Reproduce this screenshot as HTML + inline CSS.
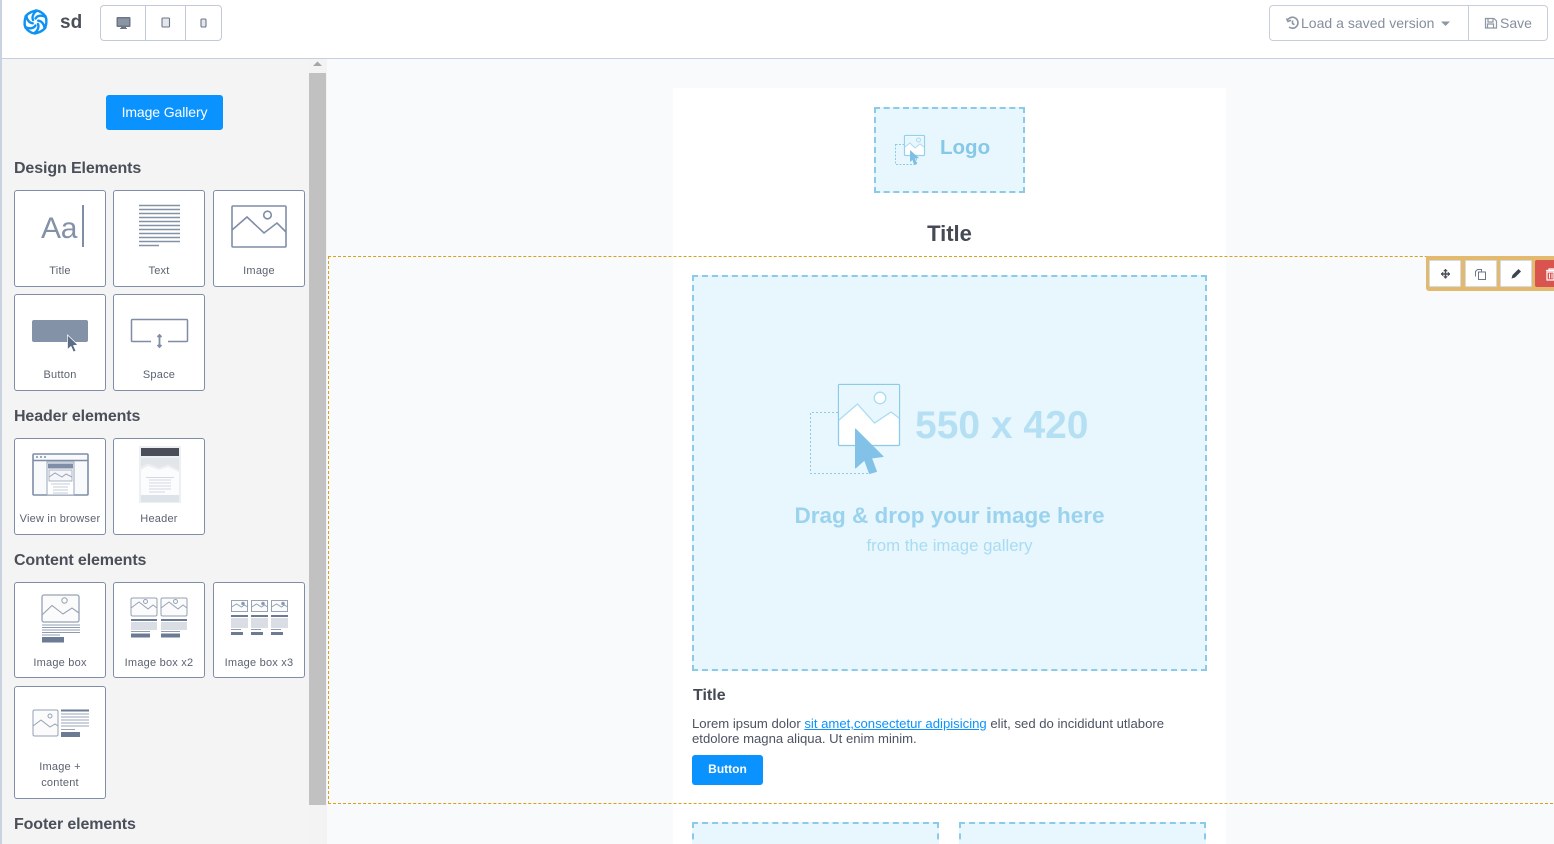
<!DOCTYPE html>
<html><head><meta charset="utf-8"><style>
html,body{margin:0;padding:0;width:1554px;height:844px;overflow:hidden;background:#f8fafc;font-family:"Liberation Sans",sans-serif}
#root{position:absolute;left:0;top:0;width:1554px;height:844px;overflow:hidden}
.a{position:absolute}
.tile{position:absolute;box-sizing:border-box;background:#fff;border:1px solid #7f8ea6;border-radius:3px;width:92px}
.lbl{position:absolute;left:0;width:90px;text-align:center;font-size:11px;letter-spacing:.22px;color:#5b6270;line-height:16px;margin-top:1px}
.h{position:absolute;left:14px;font-size:16px;font-weight:bold;color:#4a4f5a;line-height:20px;letter-spacing:-.12px;margin-top:2px}
svg{position:absolute;left:0;top:0;overflow:visible}
</style></head><body><div id="root">
<!-- canvas -->
<div class="a" style="left:673px;top:88px;width:553px;height:756px;background:#fff"></div>
<!-- header -->
<div class="a" style="left:0;top:0;width:1554px;height:58px;background:#fff"></div>
<div class="a" style="left:0;top:58px;width:1554px;height:1px;background:#c5d0de"></div>
<div class="a" style="left:0;top:0;width:2px;height:844px;background:#c9d3e0"></div>
<svg width="1554" height="60" fill="none">
<g transform="translate(35.5,22)" stroke="#0e93f5" stroke-width="2.400" stroke-linecap="round">
<path d="M0 -11.500C4 -11.500 9 -8 10 -5C7 -7 2 -7 0 -3.500"/>
<path d="M10 -5.700C11.500 -2 11 4 9 6C9 3 6.500 -1 2.700 -1.300"/>
<path d="M10 5.500C7.500 9 2 11.500 -1 11C1.500 9.500 4 5.500 2.500 2"/>
<path d="M0 11.500C-4 11.500 -9 8 -10 5C-7 7 -2 7 0 3.500"/>
<path d="M-10 5.700C-11.500 2 -11 -4 -9 -6C-9 -3 -6.500 1 -2.700 1.300"/>
<path d="M-10 -5.500C-7.500 -9 -2 -11.500 1 -11C-1.500 -9.500 -4 -5.500 -2.500 -2"/>
</g>
</svg>
<div class="a" style="left:60px;top:10px;font-size:19px;font-weight:bold;color:#4a4f5a;line-height:25px">sd</div>
<div class="a" style="left:100px;top:5px;width:122px;height:36px;box-sizing:border-box;border:1px solid #c0cad8;border-radius:4px"></div>
<div class="a" style="left:145px;top:5px;width:1px;height:36px;background:#c0cad8"></div>
<div class="a" style="left:185px;top:5px;width:1px;height:36px;background:#c0cad8"></div>
<svg width="300" height="50">
<rect x="116.500" y="17" width="14" height="10" rx="1" fill="#6d7686"/><rect x="118" y="18.500" width="11" height="7" fill="#8b94a2"/><path d="M121 27h5v1.500h-5zM120 28h7v1h-7z" fill="#6d7686"/>
<rect x="162" y="18" width="7.500" height="9" rx="1" fill="#e3e7ec" stroke="#6d7686" stroke-width="1.100"/>
<rect x="201" y="19" width="5" height="8" rx="1" fill="#e3e7ec" stroke="#6d7686" stroke-width="1.100"/>
</svg>
<div class="a" style="left:1269px;top:5px;width:279px;height:36px;box-sizing:border-box;border:1px solid #c5cfdb;border-radius:4px"></div>
<div class="a" style="left:1468px;top:5px;width:1px;height:36px;background:#c5cfdb"></div>
<svg width="1554" height="50" fill="none" stroke="#8c96a5">
<path d="M1288 19.500A5.500 5.500 0 1 1 1289 27M1286.500 18.500l1.500 3 3-1.200M1292.500 20.500v3l2 1.200" stroke-width="1.600"/>
<path d="M1441 21.500h9l-4.500 4.500z" fill="#8c96a5" stroke="none"/>
<path d="M1485.500 18.500h8.500l2.500 2.500v7h-11zM1488 18.500v3.500h5v-3.500M1487.500 28v-4h6v4" stroke-width="1.200"/>
</svg>
<div class="a" style="left:1301px;top:14px;font-size:14px;letter-spacing:.02px;color:#858f9e;line-height:18px;white-space:nowrap">Load a saved version</div>
<div class="a" style="left:1500px;top:14px;font-size:14px;color:#858f9e;line-height:18px">Save</div>

<!-- sidebar -->
<div class="a" style="left:2px;top:59px;width:307px;height:785px;background:#f4f4f4"></div>
<div class="a" style="left:309px;top:59px;width:18px;height:785px;background:#f3f3f3"></div>
<div class="a" style="left:309px;top:73px;width:17px;height:732px;background:#c1c1c1"></div>
<svg width="330" height="70"><path d="M313 66l4.500-4.500 4.500 4.500z" fill="#a3a6ab"/></svg>
<div class="a" style="left:106px;top:95px;width:117px;height:35px;background:#0a93fe;border-radius:3px;color:#fff;font-size:14px;line-height:34px;text-align:center;letter-spacing:-.1px">Image Gallery</div>

<div class="h" style="top:157px">Design Elements</div>
<div class="tile" style="left:14px;top:190px;height:97px"><div class="lbl" style="top:71px">Title</div>
<div class="a" style="left:26px;top:21px;font-size:30px;line-height:34px;color:#8492a8;letter-spacing:-.3px">Aa</div><div class="a" style="left:67px;top:14px;width:2px;height:42px;background:#7f8ea6"></div></div>
<div class="tile" style="left:113px;top:190px;height:97px"><div class="lbl" style="top:71px">Text</div>
<svg width="90" height="70"><path d="M25 14.500h41M25 18.500h41M25 22.500h41M25 26.500h41M25 30.500h41M25 34.500h41M25 38.500h41M25 42.500h41M25 46.500h41M25 50.500h41M25 54.500h20" stroke="#8492a8" stroke-width="1.500" fill="none"/></svg></div>
<div class="tile" style="left:213px;top:190px;height:97px"><div class="lbl" style="top:71px">Image</div>
<svg width="90" height="70" fill="none" stroke="#7f8ea6" stroke-width="1.600"><rect x="18" y="15" width="54" height="41" rx="1"/><circle cx="53.500" cy="24" r="3.800"/><path d="M18 39L33 26L50 42L63 32L72 41"/></svg></div>

<div class="tile" style="left:14px;top:294px;height:97px"><div class="lbl" style="top:71px">Button</div>
<svg width="90" height="70"><rect x="17" y="25" width="56" height="22" rx="2" fill="#8492a8"/><path d="M52.500 40V54.500L56 51.500L58.500 57L61 56L58.500 50.500L63 50Z" fill="#5c6c87" stroke="#fff" stroke-width=".7"/></svg></div>
<div class="tile" style="left:113px;top:294px;height:97px"><div class="lbl" style="top:71px">Space</div>
<svg width="90" height="70" fill="none" stroke="#7f8ea6" stroke-width="1.500"><path d="M37 46.500H18.500a1 1 0 0 1-1-1V25.500a1 1 0 0 1 1-1H72.500a1 1 0 0 1 1 1V45.500a1 1 0 0 1-1 1H54"/><path d="M45.500 40V52M43.500 42l2-2 2 2M43.500 50l2 2 2-2" stroke-width="1.800"/></svg></div>

<div class="h" style="top:405px">Header elements</div>
<div class="tile" style="left:14px;top:438px;height:97px"><div class="lbl" style="top:71px">View in browser</div>
<svg width="90" height="70"><rect x="18" y="15" width="55" height="41" rx="1" fill="#f8fafc" stroke="#7f8ea6" stroke-width="1.600"/><path d="M18 21.500h55" stroke="#7f8ea6" stroke-width="1.500"/><path d="M21 18h2M25 18h2M29 18h2" stroke="#7f8ea6" stroke-width="1.500"/><rect x="32" y="23" width="27" height="33" fill="#fff" stroke="#9aa6b8"/><rect x="33" y="24.500" width="25" height="5" fill="#7f8ea6"/><rect x="34" y="31" width="23" height="11" fill="#f4f6f9" stroke="#9aa6b8" stroke-width=".8"/><path d="M34 38l6-4 7 4 4-3 6 3" stroke="#9aa6b8" fill="none"/><path d="M36 45h19M38 48h15M38 51h15M38 54h15" stroke="#c5ccd7"/></svg></div>
<div class="tile" style="left:113px;top:438px;height:97px"><div class="lbl" style="top:71px">Header</div>
<svg width="90" height="70"><rect x="25" y="7" width="42" height="57" fill="#edf0f3"/><rect x="27" y="9" width="38" height="8" fill="#4b4e58"/><path d="M27 19H65V31L54 25.500 45 29 34 24.500 27 28Z" fill="#e2e5ea"/><path d="M27 31L34 27 45 31 54 28 65 33V39H27Z" fill="#fbfcfd"/><rect x="27" y="39" width="38" height="19" fill="#fbfcfd"/><path d="M32 38.500h28M35 41h22M35 44h22M35 47h22M35 50h22M35 53h16" stroke="#d3d9e0"/><rect x="27" y="56" width="38" height="7" fill="#dde3e9"/></svg></div>

<div class="h" style="top:549px">Content elements</div>
<div class="tile" style="left:14px;top:582px;height:96px"><div class="lbl" style="top:71px">Image box</div>
<svg width="90" height="70" fill="none"><rect x="27" y="12" width="37" height="27" rx="2" fill="#fbfbfc" stroke="#96a2b5" stroke-width="1.300"/><circle cx="49.500" cy="17.500" r="2.700" stroke="#96a2b5"/><path d="M27 32L37 22.500 48 31 57 25 64 30" stroke="#96a2b5" stroke-width="1.100"/><path d="M27 42h38M27 44.500h38M27 47h38M27 49.500h38M27 52h18" stroke="#8f9cb0"/><rect x="27" y="54" width="22" height="5.500" fill="#6c7b94"/></svg></div>
<div class="tile" style="left:113px;top:582px;height:96px"><div class="lbl" style="top:71px">Image box x2</div>
<svg width="90" height="70" fill="none"><g stroke="#96a2b5"><rect x="17" y="15" width="26" height="18" rx="1.500" fill="#fbfbfc"/><circle cx="31.500" cy="18.500" r="2"/><path d="M17 25l8-6 9 7 5-4 4 3"/></g><g stroke="#96a2b5"><rect x="47" y="15" width="26" height="18" rx="1.500" fill="#fbfbfc"/><circle cx="61.500" cy="18.500" r="2"/><path d="M47 25l8-6 9 7 5-4 4 3"/></g><path d="M17 37h26M47 37h26" stroke="#6c7b94" stroke-width="2"/><path d="M17 40h26M17 42h26M17 44h26M17 46h26M47 40h26M47 42h26M47 44h26M47 46h26" stroke="#b4bcc9"/><path d="M17 48.500h19M47 48.500h19" stroke="#8f9cb0"/><path d="M17 52.500h19M47 52.500h19" stroke="#6c7b94" stroke-width="4"/></svg></div>
<div class="tile" style="left:213px;top:582px;height:96px"><div class="lbl" style="top:71px">Image box x3</div>
<svg width="90" height="70" fill="none" stroke="#96a2b5"><rect x="17.500" y="17.500" width="16" height="11" fill="#fbfbfc"/><circle cx="29" cy="20.500" r="1.300" fill="#7f8ea6"/><path d="M17.500 24l5-3 5 3 3-2 3 2"/><rect x="37.500" y="17.500" width="16" height="11" fill="#fbfbfc"/><circle cx="49" cy="20.500" r="1.300" fill="#7f8ea6"/><path d="M37.500 24l5-3 5 3 3-2 3 2"/><rect x="57.500" y="17.500" width="16" height="11" fill="#fbfbfc"/><circle cx="69" cy="20.500" r="1.300" fill="#7f8ea6"/><path d="M57.500 24l5-3 5 3 3-2 3 2"/><path d="M17 33h17M37 33h17M57 33h17" stroke="#6c7b94" stroke-width="2"/><path d="M17 36h17M17 38h17M17 40h17M17 42h17M17 44h17M37 36h17M37 38h17M37 40h17M37 42h17M37 44h17M57 36h17M57 38h17M57 40h17M57 42h17M57 44h17" stroke="#b4bcc9"/><path d="M17 46.500h10M37 46.500h10M57 46.500h10" stroke="#8f9cb0"/><path d="M17 50.500h12M37 50.500h12M57 50.500h12" stroke="#6c7b94" stroke-width="3"/></svg></div>
<div class="tile" style="left:14px;top:686px;height:113px"><div class="lbl" style="top:71px">Image +<br>content</div>
<svg width="90" height="70" fill="none"><rect x="18" y="23" width="25" height="26" rx="1.500" fill="#fbfbfc" stroke="#96a2b5"/><circle cx="35" cy="29" r="2" stroke="#96a2b5"/><path d="M18 39l8-6 9 7 5-3 3 2" stroke="#96a2b5"/><path d="M46 23.500h28" stroke="#6c7b94" stroke-width="2"/><path d="M46 27h28M46 30h28M46 33h28M46 36h28M46 39h28" stroke="#99a5b7"/><path d="M46 42.500h14" stroke="#99a5b7" stroke-width="1"/><path d="M46 47.500h19" stroke="#6c7b94" stroke-width="5"/></svg></div>
<div class="h" style="top:813px">Footer elements</div>

<!-- logo placeholder -->
<div class="a" style="left:874px;top:107px;width:151px;height:86px;box-sizing:border-box;background:#e8f6fd;border:2px dashed #8ccbe8"></div>
<svg width="1100" height="200" fill="none">
<rect x="895.500" y="144.500" width="21" height="20" stroke="#8ccbe8" stroke-dasharray="2 1.500"/>
<rect x="904.500" y="135.500" width="20" height="20" rx="1" fill="#fff" stroke="#93d1ec" stroke-width="1.200"/>
<path d="M905 137H924V147L920 144 915 148 910 143 905 147Z" fill="#e8f6fd"/>
<path d="M905 147l5-4 5 5 5-4 4 3" stroke="#a9dcf3"/>
<circle cx="918.500" cy="140" r="2" stroke="#a9dcf3"/>
<path d="M910 150L919 158 915 158.500 917 164 914 165 912.500 160 910 162Z" fill="#7fbfe3"/>
</svg>
<div class="a" style="left:940px;top:134px;font-size:20.500px;font-weight:bold;color:#86c8e8;line-height:28px">Logo</div>
<div class="a" style="left:673px;top:219px;width:553px;text-align:center;font-size:22px;font-weight:bold;color:#454a55;line-height:30px">Title</div>

<!-- selected region -->
<div class="a" style="left:328px;top:256px;width:1240px;height:548px;box-sizing:border-box;border:1px dashed #d9a019"></div>
<div class="a" style="left:692px;top:275px;width:515px;height:396px;box-sizing:border-box;background:#e8f6fd;border:2px dashed #8ccbe8"></div>
<svg width="1200" height="500" fill="none">
<path d="M838 412.500H810.500V473.500H870" stroke="#8ccbe8" stroke-dasharray="2 2"/>
<rect x="838.500" y="384.500" width="61" height="61" rx="1" fill="#fff" stroke="#8ccbe8" stroke-width="1.300"/>
<path d="M839 385H899V418L891 412 874.500 423 857.500 404 839 420Z" fill="#e8f6fd"/>
<path d="M839 420L857.500 404 874.500 423 891 412 899 418" stroke="#a9dcf3" stroke-width="1.300"/>
<circle cx="880" cy="398" r="5.800" fill="#fff" stroke="#a9dcf3" stroke-width="1.300"/>
<path d="M855.500 429L883 456.500 871.500 458 876.500 471.500 869.500 473.500 864.500 460 855.500 468Z" fill="#82c2e8" stroke="#82c2e8" stroke-linejoin="round"/>
</svg>
<div class="a" style="left:915px;top:403px;font-size:39px;font-weight:bold;color:#b5e0f3;line-height:46px;white-space:nowrap">550 x 420</div>
<div class="a" style="left:692px;top:501px;width:515px;text-align:center;font-size:22.500px;font-weight:bold;color:#9bd3ee;line-height:30px">Drag &amp; drop your image here</div>
<div class="a" style="left:692px;top:536px;width:515px;text-align:center;font-size:16.800px;color:#a9dcf3;line-height:20px">from the image gallery</div>
<div class="a" style="left:693px;top:686px;font-size:16px;font-weight:bold;color:#454a55;line-height:20px">Title</div>
<div class="a" style="left:692px;top:716px;width:500px;font-size:13.130px;color:#4c5361;line-height:15px;white-space:nowrap">Lorem ipsum dolor <span style="color:#0a93fe;text-decoration:underline">sit amet,consectetur adipisicing</span> elit, sed do incididunt utlabore<br>etdolore magna aliqua. Ut enim minim.</div>
<div class="a" style="left:692px;top:755px;width:71px;height:30px;background:#0a93fe;border-radius:3px;color:#fff;font-size:12px;font-weight:bold;text-align:center;line-height:29px">Button</div>
<div class="a" style="left:692px;top:822px;width:247px;height:40px;box-sizing:border-box;background:#e8f6fd;border:2px dashed #8ccbe8"></div>
<div class="a" style="left:959px;top:822px;width:247px;height:40px;box-sizing:border-box;background:#e8f6fd;border:2px dashed #8ccbe8"></div>

<!-- toolbar -->
<div class="a" style="left:1426px;top:256px;width:128px;height:35px;background:#e3b96e;border-radius:0 0 0 3px"></div>
<div class="a" style="left:1429px;top:260px;width:32px;height:27px;background:#fff;border-radius:2px;box-shadow:inset 0 0 0 1px #d5dbe3"></div>
<div class="a" style="left:1465px;top:260px;width:32px;height:27px;background:#fff;border-radius:2px;box-shadow:inset 0 0 0 1px #d5dbe3"></div>
<div class="a" style="left:1500px;top:260px;width:32px;height:27px;background:#fff;border-radius:2px;box-shadow:inset 0 0 0 1px #d5dbe3"></div>
<div class="a" style="left:1535px;top:260px;width:19px;height:27px;background:#d9534f;border-radius:2px 0 0 2px"></div>
<svg width="1554" height="300" fill="none">
<path d="M1445.500 269.500V278.500M1441 274H1450" stroke="#4a4f5a" stroke-width="1.500"/><path d="M1443.500 271l2-2 2 2zM1443.500 276.500l2 2 2-2zM1443 272l-2 2 2 2zM1448 272l2 2-2 2z" fill="#4a4f5a" stroke="#4a4f5a" stroke-width=".5"/>
<path d="M1475.500 276.500V271.500L1477.500 269.500H1481.500V272M1478.500 272H1485.500V279.500H1478.500Z" stroke="#6d7686"/>
<path d="M1511.500 278.500L1512.500 275 1518.500 269 1521 271.500 1515 277.500Z" fill="#3d4350"/>
<path d="M1546 270.500H1554M1549 270.500V269H1554M1547 272H1554V280H1547Z" stroke="#fff" stroke-width="1.200"/>
<path d="M1549.500 273.500V278.500M1552 273.500V278.500" stroke="#fff"/>
</svg>
</div></body></html>
